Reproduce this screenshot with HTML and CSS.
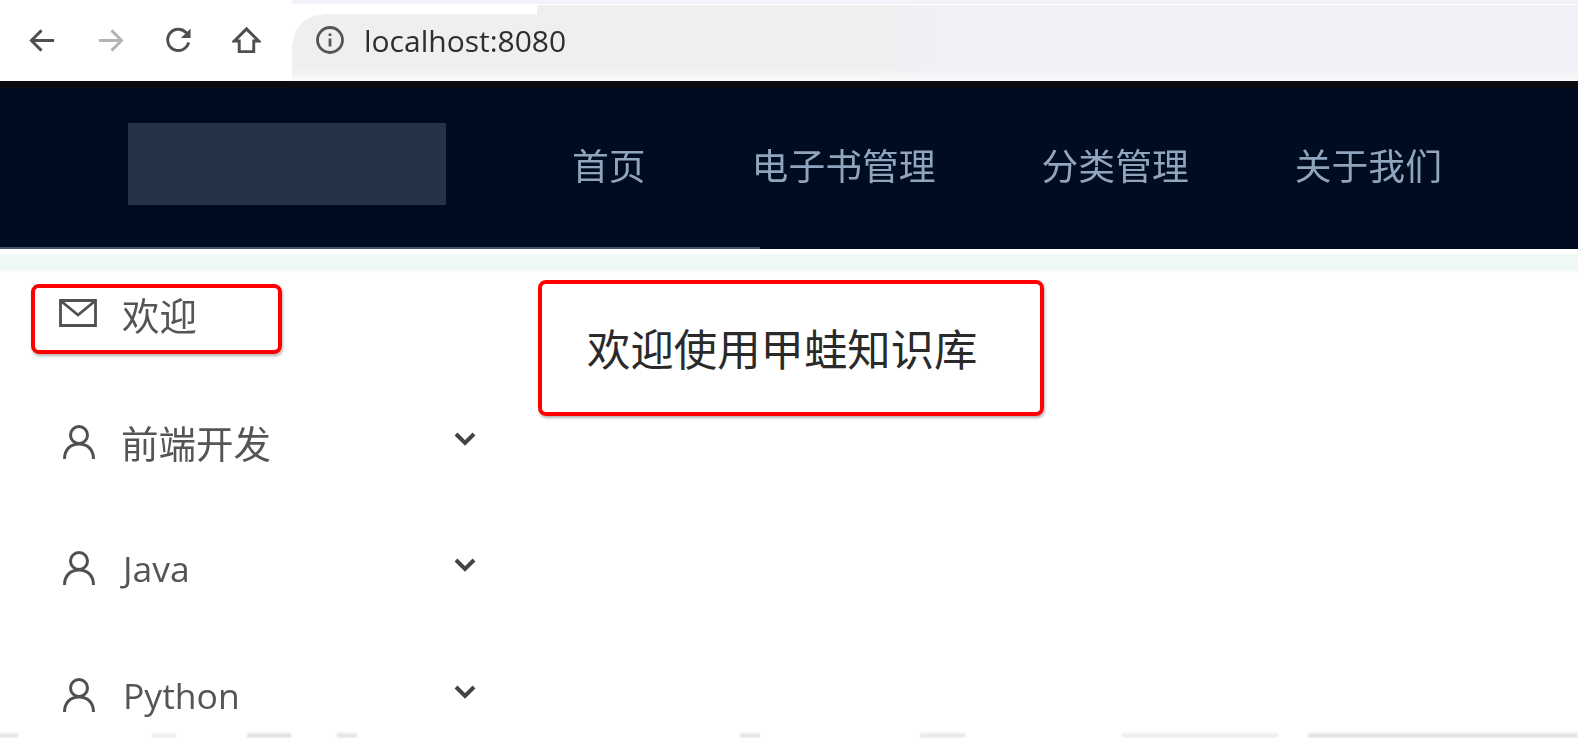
FILE: index.html
```html
<!DOCTYPE html>
<html lang="zh">
<head>
<meta charset="utf-8">
<title>甲蛙知识库</title>
<link rel="stylesheet" href="styles.css">
</head>
<body>
<div class="toolbar">
  <div class="tools">
    <svg class="tool" viewBox="0 0 30 30"><path d="M27 15H4M14 4.500 3.500 15 14 25.500"/></svg>
    <svg class="tool dim" viewBox="0 0 30 30"><path d="M3 15h23M16 4.500 26.500 15 16 25.500"/></svg>
    <svg class="tool" viewBox="0 0 30 30"><path d="M25.500 17a11 11 0 1 1-3-10.500L26 10"/><path class="solid" d="M27.500 2.500v10h-10z"/></svg>
    <svg class="tool" viewBox="0 0 30 30"><path d="M15 3 2.500 15.500H7.500V26.500H22.500V15.500H27.500Z"/></svg>
  </div>
  <div class="address">
    <svg class="info" viewBox="0 0 28 28"><circle cx="14" cy="14" r="12.500"/><path d="M14 12.500v8M14 7.500v2.500"/></svg>
    <span class="url">localhost:8080</span>
  </div>
</div>
<header class="site-header">
  <div class="logo"></div>
  <nav class="nav">
    <a>首页</a><a>电子书管理</a><a>分类管理</a><a>关于我们</a>
  </nav>
</header>
<div class="strip"></div>
<div class="body">
  <aside class="side">
    <div class="item boxed">
      <svg class="ico mail" viewBox="0 0 38 28"><path d="M1.500 1.500h35v25h-35zM2 2l17 14L36 2"/></svg>
      <span>欢迎</span>
    </div>
    <div class="item">
      <svg class="ico" viewBox="0 0 34 36"><circle cx="17" cy="11" r="8.500"/><path d="M2.500 35c0-9 5.500-15 14.500-15s14.500 6 14.500 15"/></svg>
      <span>前端开发</span>
      <svg class="chev" viewBox="0 0 22 14"><path d="M2 2l9 9 9-9"/></svg>
    </div>
    <div class="item">
      <svg class="ico" viewBox="0 0 34 36"><circle cx="17" cy="11" r="8.500"/><path d="M2.500 35c0-9 5.500-15 14.500-15s14.500 6 14.500 15"/></svg>
      <span class="latin">Java</span>
      <svg class="chev" viewBox="0 0 22 14"><path d="M2 2l9 9 9-9"/></svg>
    </div>
    <div class="item">
      <svg class="ico" viewBox="0 0 34 36"><circle cx="17" cy="11" r="8.500"/><path d="M2.500 35c0-9 5.500-15 14.500-15s14.500 6 14.500 15"/></svg>
      <span class="latin">Python</span>
      <svg class="chev" viewBox="0 0 22 14"><path d="M2 2l9 9 9-9"/></svg>
    </div>
  </aside>
  <main class="content">
    <div class="welcome">欢迎使用甲蛙知识库</div>
  </main>
</div>
<div class="peek"></div>
</body>
</html>
```
FILE: styles.css
```css
* { box-sizing: border-box; }
html, body { margin: 0; height: 738px; overflow: hidden; background: #fff; }
body {
  font-family: "Open Sans", "Noto Sans CJK SC", sans-serif;
  display: flex;
  flex-direction: column;
}
svg { filter: blur(.35px); }

.toolbar {
  height: 81px;
  flex: none;
  display: flex;
  background: linear-gradient(#f2f2f8 0, #f2f2f8 4px, #fff 4px);
}
.tools {
  width: 292px;
  height: 81px;
  padding: 26px 0 0 28px;
  display: flex;
  gap: 39px;
  background: #fff;
  flex: none;
}
.tool { width: 29px; height: 29px; fill: none; stroke: #4f4f4f; stroke-width: 3; flex: none; }
.tool.dim { stroke: #b4b4b4; }
.tool .solid { fill: #4f4f4f; stroke: none; }
.address {
  flex: 1;
  margin-top: 5px;
  height: 76px;
  position: relative;
  display: flex;
  align-items: center;
  gap: 20px;
  padding: 0 0 6px 24px;
  background:
    linear-gradient(transparent 84%, #fbfbfc),
    linear-gradient(90deg, #f0efef 590px, #f0f0f7 640px);
}
.address::before {
  content: "";
  position: absolute;
  left: 0;
  top: 0;
  width: 245px;
  height: 9px;
  background: #fff;
}
.address::after {
  content: "";
  position: absolute;
  left: 0;
  top: 9px;
  width: 30px;
  height: 30px;
  background: radial-gradient(circle at 100% 100%, transparent 28px, #fff 30px);
}
.info { width: 28px; height: 28px; fill: none; stroke: #555; stroke-width: 2.800; position: relative; z-index: 1; }
.url { font-size: 30px; color: #2e2e2e; filter: blur(.4px); }

.site-header {
  height: 168px;
  flex: none;
  position: relative;
  background: #000c1f;
  display: flex;
  align-items: center;
  padding: 0 0 5px 128px;
  border-top: 7px solid #0b0b10;
}
.site-header::after {
  content: "";
  position: absolute;
  left: 0;
  bottom: 0;
  width: 760px;
  height: 2px;
  background: #4a5667;
}
.logo { width: 318px; height: 82px; margin-bottom: 5px; background: #253348; }
.nav { margin-left: 126px; display: flex; gap: 106px; }
.nav a { font-size: 36.800px; line-height: 1; color: #8fa4bd; filter: blur(.4px); white-space: nowrap; }

.strip {
  height: 19px;
  margin-top: 5px;
  flex: none;
  background: linear-gradient(#eef8f5 75%, #fff);
}

.body { display: flex; flex: 1; min-height: 0; overflow: hidden; }
.side { width: 538px; flex: none; display: flex; flex-direction: column; padding: 11px 0 0 31px; }
.item {
  width: 445px;
  height: 70px;
  flex: none;
  margin-bottom: 56.500px;
  display: flex;
  align-items: center;
  padding: 0 0 6px 31px;
  font-size: 37.500px;
  color: #555;
}
.item span { margin-left: 25px; filter: blur(.4px); }
.item .latin { margin-left: 27px; font-size: 35.500px; }
.boxed {
  width: 251px;
  height: 70px;
  margin-bottom: 55.500px;
  border: 4px solid #f00;
  border-radius: 8px;
  box-shadow: 1px 2px 3px rgba(0, 0, 0, .3);
  padding: 0 0 12px 25px;
}
.boxed span { margin-left: 25px; }
.ico { width: 34px; height: 36px; fill: none; stroke: #505050; stroke-width: 3; flex: none; }
.mail { width: 38px; height: 28px; stroke-width: 2.800; margin-left: -1px; }
.chev {
  width: 22px;
  height: 14px;
  margin-left: auto;
  margin-bottom: 6px;
  fill: none;
  stroke: #444;
  stroke-width: 4;
  flex: none;
}
.content { flex: 1; padding-top: 7px; }
.welcome {
  width: 506px;
  height: 136px;
  border: 4px solid #f00;
  border-radius: 8px;
  box-shadow: 1px 2px 3px rgba(0, 0, 0, .3);
  padding: 0 0 1px 45px;
  display: flex;
  align-items: center;
  font-size: 43.400px;
  color: #2a2a2a;
}

.peek {
  height: 5px;
  flex: none;
  filter: blur(1px);
  background:
    linear-gradient(#e6e6e6, #e6e6e6) 0 0 / 18px 100% no-repeat,
    linear-gradient(#efefef, #efefef) 152px 0 / 24px 100% no-repeat,
    linear-gradient(#e2e2e2, #e2e2e2) 247px 0 / 44px 100% no-repeat,
    linear-gradient(#e6e6e6, #e6e6e6) 337px 0 / 20px 100% no-repeat,
    linear-gradient(#e6e6e6, #e6e6e6) 740px 0 / 20px 100% no-repeat,
    linear-gradient(#e9e9e9, #e9e9e9) 920px 0 / 45px 100% no-repeat,
    linear-gradient(#eeeeee, #eeeeee) 1122px 0 / 156px 100% no-repeat,
    linear-gradient(#e4e4e4, #e4e4e4) 1308px 0 / 270px 100% no-repeat;
}
```
